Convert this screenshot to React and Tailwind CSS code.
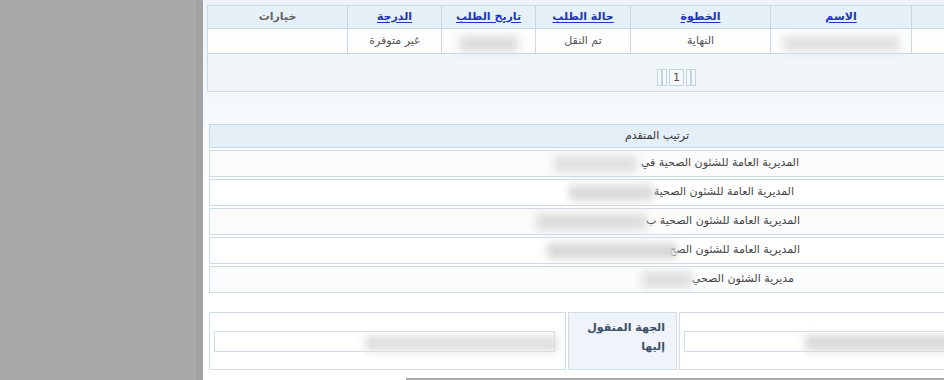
import React from "react";

const cellB = "border-l border-b border-[#c9d8e3]";

function HeadCell({ children, link = true }) {
  return (
    <div className={`h-[23px] ${cellB} bg-[#e6f0f8] flex items-center justify-center text-[11px] font-bold`}>
      {link ? (
        <a className="text-[#1c35c2] underline underline-offset-2 cursor-pointer">{children}</a>
      ) : (
        <span className="text-[#666]">{children}</span>
      )}
    </div>
  );
}

function BodyCell({ children }) {
  return (
    <div className={`h-[25px] ${cellB} bg-[#fdfdfd] flex items-center justify-center text-[11px] text-[#555]`}>
      {children}
    </div>
  );
}

export default function App() {
  return (
    <div className="w-[944px] h-[380px] flex overflow-hidden font-['DejaVu_Sans',sans-serif]">
      <div className="w-[196px] shrink-0 bg-[#a9a9a9]" />
      <div className="w-[7px] shrink-0 bg-[#a0a2a4]" />
      <div className="flex-1 min-w-0 overflow-hidden bg-[linear-gradient(to_bottom,#edf3f8_0px,#f4f8fb_100px,#fcfdfe_150px,#ffffff_200px)]">
        {/* Table */}
        <div dir="rtl" className="mt-[5px] ml-[4px] w-[939px] border-t border-r border-[#c9d8e3]">
          <div className="grid grid-cols-[234px_141px_140px_95px_94px_94px_140px]">
            <div className={`h-[23px] ${cellB} bg-[#e6f0f8]`} />
            <HeadCell>الاسم</HeadCell>
            <HeadCell>الخطوة</HeadCell>
            <HeadCell>حالة الطلب</HeadCell>
            <HeadCell>تاريخ الطلب</HeadCell>
            <HeadCell>الدرجة</HeadCell>
            <HeadCell link={false}>خيارات</HeadCell>

            <BodyCell />
            <BodyCell>
              <div className="w-[117px] h-[16px] mt-[5px] bg-[#e2e2e2] blur-[4px]" />
            </BodyCell>
            <BodyCell>النهاية</BodyCell>
            <BodyCell>تم النقل</BodyCell>
            <BodyCell>
              <div className="w-[58px] h-[16px] mt-[5px] bg-[#dcdcdc] blur-[4px]" />
            </BodyCell>
            <BodyCell>غير متوفرة</BodyCell>
            <BodyCell />

            <div className={`col-span-7 h-[38px] ${cellB} bg-[#f1f6fa] flex justify-center pt-[15px]`}>
              <div dir="ltr" className="flex h-[17px] items-stretch">
                <span className="w-[5px] border border-[#c5d3de] bg-[#f7fafc]" />
                <span className="w-[5px] border border-[#c5d3de] bg-[#f7fafc]" />
                <span className="ml-[2px] w-[15px] border border-[#c5d3de] bg-[#f7fafc] text-[11px] leading-[15px] text-center text-[#5b4c3a]">1</span>
                <span className="ml-[2px] w-[5px] border border-[#c5d3de] bg-[#f7fafc]" />
                <span className="w-[5px] border border-[#c5d3de] bg-[#f7fafc]" />
              </div>
            </div>
          </div>
        </div>

        {/* Applicant ranking */}
        <div dir="rtl" className="mt-[32px] ml-[6px] w-[918px] text-[11px]">
          <div className="h-[24px] border border-[#c6d8e5] bg-[#e4eff8] flex items-center pr-[437px] text-[#333]">
            ترتيب المتقدم
          </div>
          <div className="mt-[2px] flex flex-col gap-[2px] text-[#444]">
            <div className="h-[27px] border border-[#cddbe5] bg-[#fbfbfb] flex items-center pr-[327px]">
              <span>المديرية العامة للشئون الصحية في</span>
              <div className="mr-[4px] w-[83px] h-[16px] bg-[#e0e0e0] blur-[4px]" />
            </div>
            <div className="h-[27px] border border-[#cddbe5] bg-white flex items-center pr-[332px]">
              <span>المديرية العامة للشئون الصحية</span>
              <div className="w-[85px] h-[16px] bg-[#dadada] blur-[4px]" />
            </div>
            <div className="h-[27px] border border-[#cddbe5] bg-[#fbfbfb] flex items-center pr-[326px]">
              <span>المديرية العامة للشئون الصحية ب</span>
              <div className="w-[110px] h-[16px] bg-[#dcdcdc] blur-[4px]" />
            </div>
            <div className="h-[27px] border border-[#cddbe5] bg-white flex items-center pr-[326px]">
              <span>المديرية العامة للشئون الصح</span>
              <div className="-mr-[8px] w-[130px] h-[16px] bg-[#d8d8d8] blur-[4px]" />
            </div>
            <div className="h-[27px] border border-[#cddbe5] bg-[#fbfcfd] flex items-center pr-[332px]">
              <span>مديرية الشئون الصحي</span>
              <div className="w-[50px] h-[16px] bg-[#dedede] blur-[4px]" />
            </div>
          </div>
        </div>

        {/* Transfer destination */}
        <div className="mt-[19px] ml-[6px] flex h-[58px] gap-[2px]">
          <div className="w-[357px] shrink-0 border border-[#cfdde6] bg-white flex items-center pl-[4px]">
            <div dir="rtl" className="w-[341px] h-[21px] border border-[#cfdde6] bg-white flex items-center">
              <div className="-mr-[3px] mt-[4px] w-[192px] h-[15px] bg-[#dedede] blur-[4px]" />
            </div>
          </div>
          <div dir="rtl" className="w-[109px] shrink-0 border border-[#cfdde6] bg-[#eef4f9] flex items-start pt-[5px] pr-[11px] text-[11px] leading-[19px] font-bold text-[#3a4f66]">
            <span>الجهة المنقول<br />إليها</span>
          </div>
          <div className="w-[448px] shrink-0 border border-[#cfdde6] bg-white flex items-center pl-[4px]">
            <div className="w-[500px] h-[21px] border border-[#cfdde6] bg-white flex items-center">
              <div className="ml-[120px] mt-[4px] w-[200px] h-[16px] bg-[#dadada] blur-[4px]" />
            </div>
          </div>
        </div>

        <div className="mt-[8px] ml-[203px] w-[800px] h-[2px] bg-[#ababab]" />
      </div>
    </div>
  );
}
